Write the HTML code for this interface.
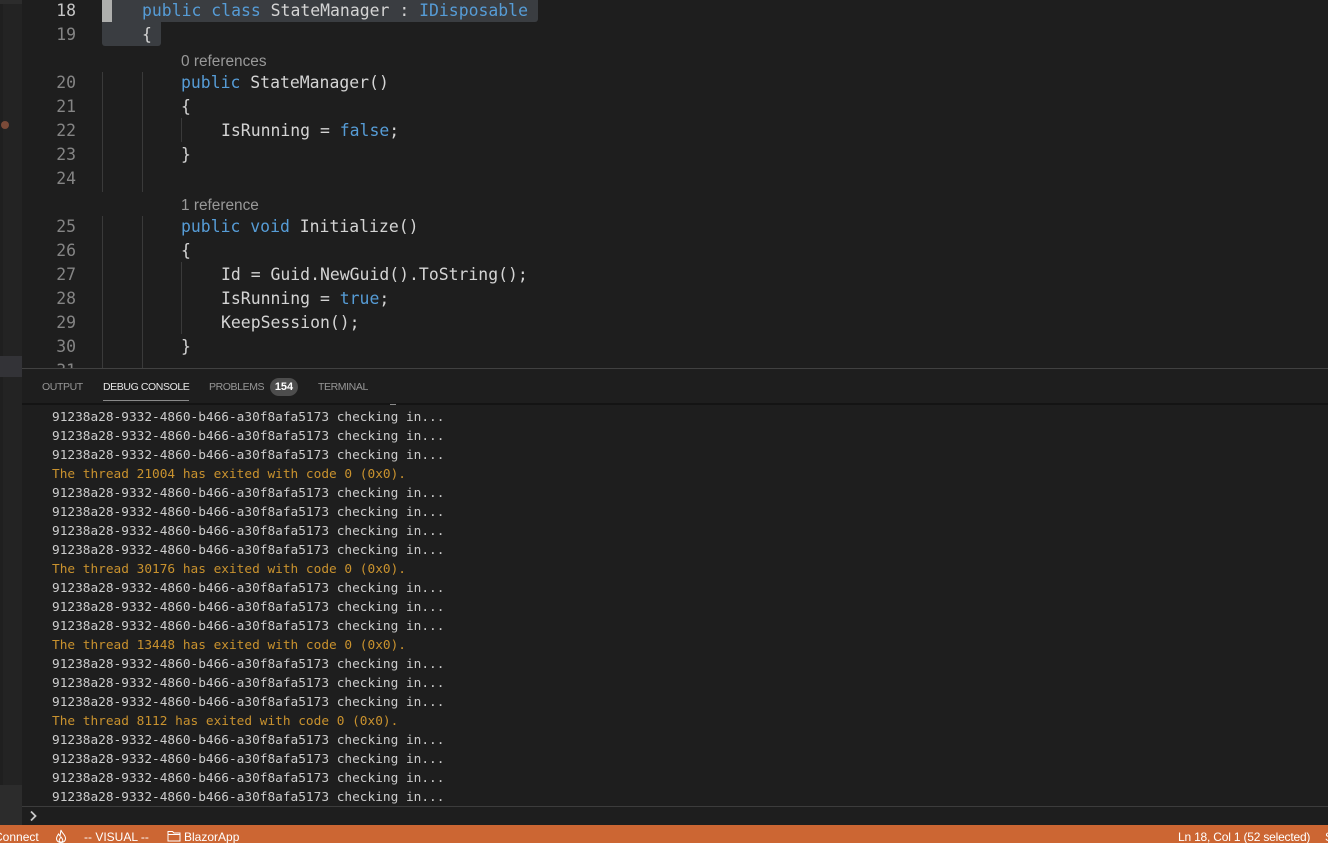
<!DOCTYPE html>
<html><head><meta charset="utf-8"><style>
html,body{margin:0;padding:0;background:#1e1e1e;width:1328px;height:843px;overflow:hidden}
#r{position:relative;width:1328px;height:843px;overflow:hidden;background:#1e1e1e}
.a{position:absolute}
.c{position:absolute;margin-top:1px;font:16.44px/24px "DejaVu Sans Mono",monospace;color:#d4d4d4;white-space:pre;height:24px}
.k{color:#569cd6}
.n{position:absolute;margin-top:1px;left:40px;width:36px;text-align:right;font:16.44px/24px "DejaVu Sans Mono",monospace;color:#858585}
.l{position:absolute;margin-top:1px;font:15.4px/18px "Liberation Sans",sans-serif;color:#999;white-space:pre}
.g{position:absolute;width:1px;background:#3a3a3a}
.o{position:absolute;margin-top:1px;left:52px;font:12.79px/19px "DejaVu Sans Mono",monospace;color:#ccc;white-space:pre}
.y{color:#c9922e}
.t{position:absolute;top:380px;font:10.5px/14px "Liberation Sans",sans-serif;letter-spacing:-.4px;color:#969696;white-space:pre}
.s{position:absolute;top:829px;font:12px/16px "Liberation Sans",sans-serif;color:#fff;white-space:pre}
</style></head><body><div id="r">
<div class="a" style="left:0;top:0;width:22px;height:825px;background:#1f1f1f"></div>
<div class="a" style="left:3px;top:0;width:19px;height:825px;background:#232323"></div>
<div class="a" style="left:0;top:0;width:22px;height:4px;background:#2c2c2c"></div>
<div class="a" style="left:0;top:356px;width:22px;height:21px;background:#333337"></div>
<div class="a" style="left:0;top:785px;width:22px;height:40px;background:#2c2c2c"></div>
<div class="a" style="left:1px;top:121px;width:8px;height:8px;border-radius:50%;background:#7a4a38"></div>

<div class="a" style="left:102px;top:0;width:436px;height:22px;background:#3a3d41;border-radius:0 0 3px 0"></div>
<div class="a" style="left:102px;top:22px;width:59px;height:24px;background:#3a3d41;border-radius:0 0 3px 3px"></div>
<div class="a" style="left:102px;top:0;width:10px;height:22px;background:#aeafad"></div>

<div class="g" style="left:102px;top:72px;height:120px"></div>
<div class="g" style="left:142px;top:72px;height:120px"></div>
<div class="g" style="left:102px;top:216px;height:152px"></div>
<div class="g" style="left:142px;top:216px;height:152px"></div>
<div class="g" style="left:181px;top:118px;height:24px"></div>
<div class="g" style="left:181px;top:262px;height:72px"></div>

<div class="n" style="top:-2px;color:#c6c6c6">18</div>
<div class="n" style="top:22px">19</div>
<div class="n" style="top:70px">20</div>
<div class="n" style="top:94px">21</div>
<div class="n" style="top:118px">22</div>
<div class="n" style="top:142px">23</div>
<div class="n" style="top:166px">24</div>
<div class="n" style="top:214px">25</div>
<div class="n" style="top:238px">26</div>
<div class="n" style="top:262px">27</div>
<div class="n" style="top:286px">28</div>
<div class="n" style="top:310px">29</div>
<div class="n" style="top:334px">30</div>
<div class="n" style="top:358px">31</div>

<div class="c" style="left:142px;top:-2px"><span class="k">public class</span> StateManager : <span class="k">IDisposable</span></div>
<div class="c" style="left:142px;top:22px">{</div>
<div class="l" style="left:181px;top:52px">0 references</div>
<div class="c" style="left:181px;top:70px"><span class="k">public</span> StateManager()</div>
<div class="c" style="left:181px;top:94px">{</div>
<div class="c" style="left:221px;top:118px">IsRunning = <span class="k">false</span>;</div>
<div class="c" style="left:181px;top:142px">}</div>
<div class="l" style="left:181px;top:196px">1 reference</div>
<div class="c" style="left:181px;top:214px"><span class="k">public void</span> Initialize()</div>
<div class="c" style="left:181px;top:238px">{</div>
<div class="c" style="left:221px;top:262px">Id = Guid.NewGuid().ToString();</div>
<div class="c" style="left:221px;top:286px">IsRunning = <span class="k">true</span>;</div>
<div class="c" style="left:221px;top:310px">KeepSession();</div>
<div class="c" style="left:181px;top:334px">}</div>

<div class="a" style="left:22px;top:368px;width:1306px;height:457px;background:#1e1e1e;border-top:1px solid #414141;box-sizing:border-box"></div>
<div class="t" style="left:42px">OUTPUT</div>
<div class="t" style="left:103px;color:#e7e7e7">DEBUG CONSOLE</div>
<div class="a" style="left:103px;top:400px;width:86px;height:1px;background:#8a8a8a"></div>
<div class="t" style="left:209px">PROBLEMS</div>
<div class="a" style="left:270px;top:378px;width:28px;height:18px;border-radius:9px;background:#4d4d4d;color:#fff;font:bold 11px/18px 'Liberation Sans',sans-serif;text-align:center">154</div>
<div class="t" style="left:318px">TERMINAL</div>
<div class="a" style="left:22px;top:403px;width:1306px;height:2px;background:#141414"></div>
<div class="a" style="left:390px;top:404px;width:6px;height:1px;background:#8a8a8a"></div>

<div class="o" style="top:407px">91238a28-9332-4860-b466-a30f8afa5173 checking in...</div>
<div class="o" style="top:426px">91238a28-9332-4860-b466-a30f8afa5173 checking in...</div>
<div class="o" style="top:445px">91238a28-9332-4860-b466-a30f8afa5173 checking in...</div>
<div class="o y" style="top:464px">The thread 21004 has exited with code 0 (0x0).</div>
<div class="o" style="top:483px">91238a28-9332-4860-b466-a30f8afa5173 checking in...</div>
<div class="o" style="top:502px">91238a28-9332-4860-b466-a30f8afa5173 checking in...</div>
<div class="o" style="top:521px">91238a28-9332-4860-b466-a30f8afa5173 checking in...</div>
<div class="o" style="top:540px">91238a28-9332-4860-b466-a30f8afa5173 checking in...</div>
<div class="o y" style="top:559px">The thread 30176 has exited with code 0 (0x0).</div>
<div class="o" style="top:578px">91238a28-9332-4860-b466-a30f8afa5173 checking in...</div>
<div class="o" style="top:597px">91238a28-9332-4860-b466-a30f8afa5173 checking in...</div>
<div class="o" style="top:616px">91238a28-9332-4860-b466-a30f8afa5173 checking in...</div>
<div class="o y" style="top:635px">The thread 13448 has exited with code 0 (0x0).</div>
<div class="o" style="top:654px">91238a28-9332-4860-b466-a30f8afa5173 checking in...</div>
<div class="o" style="top:673px">91238a28-9332-4860-b466-a30f8afa5173 checking in...</div>
<div class="o" style="top:692px">91238a28-9332-4860-b466-a30f8afa5173 checking in...</div>
<div class="o y" style="top:711px">The thread 8112 has exited with code 0 (0x0).</div>
<div class="o" style="top:730px">91238a28-9332-4860-b466-a30f8afa5173 checking in...</div>
<div class="o" style="top:749px">91238a28-9332-4860-b466-a30f8afa5173 checking in...</div>
<div class="o" style="top:768px">91238a28-9332-4860-b466-a30f8afa5173 checking in...</div>
<div class="o" style="top:787px">91238a28-9332-4860-b466-a30f8afa5173 checking in...</div>

<div class="a" style="left:22px;top:806px;width:1306px;height:1px;background:#3c3c3c"></div>
<svg class="a" style="left:28px;top:810px" width="12" height="12" viewBox="0 0 12 12"><path d="M3 1.500L7.500 6L3 10.500" fill="none" stroke="#c8c8c8" stroke-width="1.800"/></svg>

<div class="a" style="left:0;top:825px;width:1328px;height:18px;background:#cc6633"></div>
<div class="s" style="left:-6px">Connect</div>
<svg class="a" style="left:55px;top:829px" width="12" height="14" viewBox="0 0 12 14"><path d="M6 1C6.500 4 10.500 5.500 10.500 9.500C10.500 12 8.500 13.500 6 13.500C3.500 13.500 1.500 12 1.500 9.500C1.500 7.500 2.800 6.500 3.500 5C4.200 6 4.500 6.500 5 7C5.500 5 5.500 3 6 1ZM6 8C5 9.500 4.200 10 4.200 11.200C4.200 12.300 5 13 6 13C7 13 7.800 12.300 7.800 11.200C7.800 10 7 9.500 6 8Z" fill="none" stroke="#fff" stroke-width="1"/></svg>
<div class="s" style="left:84px">-- VISUAL --</div>
<svg class="a" style="left:167px;top:830px" width="14" height="12" viewBox="0 0 14 12"><path d="M1 1.500H5.500L7 3H13V11H1ZM1 4.500H13" fill="none" stroke="#fff" stroke-width="1"/></svg>
<div class="s" style="left:184px">BlazorApp</div>
<div class="s" style="left:1178px;letter-spacing:-.2px">Ln 18, Col 1 (52 selected)</div>
<div class="s" style="left:1325px">S</div>
</div></body></html>
